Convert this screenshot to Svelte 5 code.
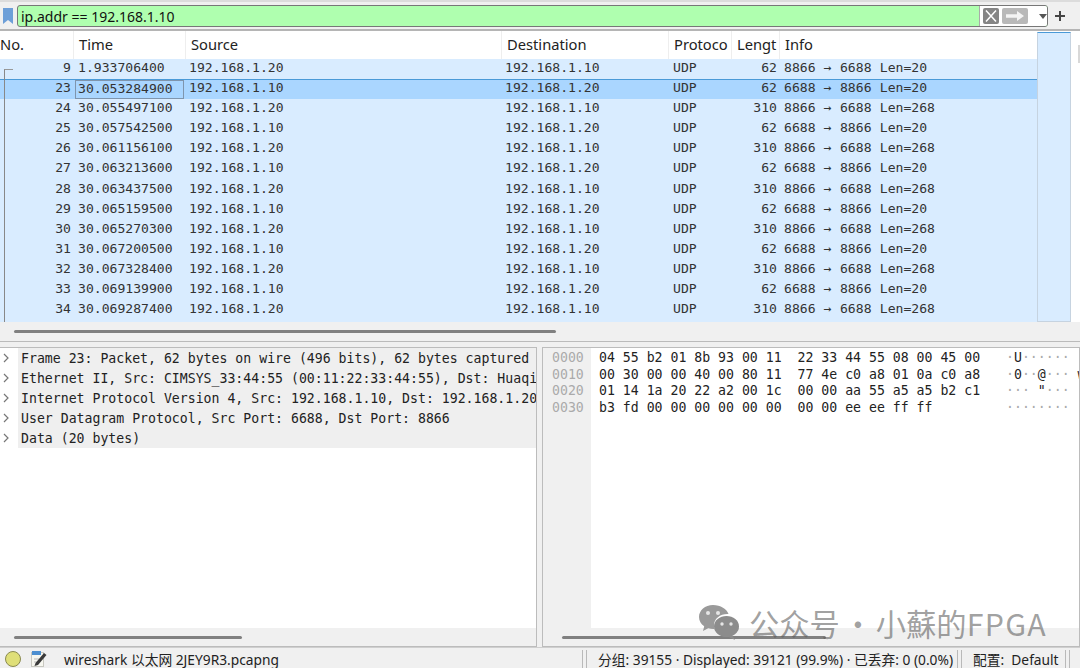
<script>
  const s20 = '192.168.1.20', s10 = '192.168.1.10';
  const raw = [
    [9,'1.933706400',0],[23,'30.053284900',1],[24,'30.055497100',0],[25,'30.057542500',1],
    [26,'30.061156100',0],[27,'30.063213600',1],[28,'30.063437500',0],[29,'30.065159500',1],
    [30,'30.065270300',0],[31,'30.067200500',1],[32,'30.067328400',0],[33,'30.069139900',1],[34,'30.069287400',0]
  ];
  const rows = raw.map(([no,time,rev]) => {
    const short = no === 9 || rev === 1;
    return { no, time, src: rev ? s10 : s20, dst: rev ? s20 : s10, len: short ? 62 : 310,
      info: (rev ? '6688 → 8866' : '8866 → 6688') + ' Len=' + (short ? 20 : 268) };
  });
  const tree = [
    'Frame 23: Packet, 62 bytes on wire (496 bits), 62 bytes captured (496 bits) on interface',
    'Ethernet II, Src: CIMSYS_33:44:55 (00:11:22:33:44:55), Dst: Huaqin_01:8b:93',
    'Internet Protocol Version 4, Src: 192.168.1.10, Dst: 192.168.1.20',
    'User Datagram Protocol, Src Port: 6688, Dst Port: 8866',
    'Data (20 bytes)'
  ];
  const hex = [
    ['0000','04 55 b2 01 8b 93 00 11  22 33 44 55 08 00 45 00','·U······ "3DU··E·'],
    ['0010','00 30 00 00 40 00 80 11  77 4e c0 a8 01 0a c0 a8','·0··@··· wN······'],
    ['0020','01 14 1a 20 22 a2 00 1c  00 00 aa 55 a5 a5 b2 c1','··· "··· ··U·····'],
    ['0030','b3 fd 00 00 00 00 00 00  00 00 ee ee ff ff','········ ······']
  ];
</script>

<div class="win">
  <div class="toolbar">
    <svg class="bm" width="12" height="17" viewBox="0 0 12 17"><path d="M1 0h10v16l-5-4-5 4z" fill="#6d9fd8"/></svg>
    <div class="filter">
      <span class="ftext">ip.addr == 192.168.1.10</span>
      <div class="fbtns">
        <svg width="16" height="16" viewBox="0 0 16 16"><rect width="16" height="16" rx="2" fill="#858585"/><path d="M3 2.500l10 11M13 2.500L3 13.500" stroke="#fff" stroke-width="1.500"/></svg>
        <svg width="26" height="16" viewBox="0 0 26 16"><rect width="26" height="16" rx="2" fill="#b9b9b9"/><path d="M4 6.300h11V3l7 5-7 5V9.700H4z" fill="#f4f4f4"/></svg>
        <svg class="caret" width="8" height="5" viewBox="0 0 8 5"><path d="M0 0h8L4 5z" fill="#555"/></svg>
      </div>
    </div>
    <svg class="plus" width="10" height="10" viewBox="0 0 10 10"><path d="M5 0v10M0 5h10" stroke="#444" stroke-width="2"/></svg>
  </div>

  <div class="list">
    <div class="listmain">
      <div class="head">
        <span class="c-no">No.</span><span class="c-time">Time</span><span class="c-src">Source</span><span class="c-dst">Destination</span><span class="c-pro">Protoco</span><span class="c-len">Lengt</span><span class="c-info">Info</span>
      </div>
      <div class="rows">
        {#each rows as r}
          <div class="row" class:sel={r.no === 23}>
            <span class="d-no">{r.no}</span><span class="d-time" class:focus={r.no === 23}>{r.time}</span><span class="d-src">{r.src}</span><span class="d-dst">{r.dst}</span><span class="d-pro">UDP</span><span class="d-len">{r.len}</span><span class="d-info">{r.info}</span>
          </div>
        {/each}
        <div class="rel"></div>
      </div>
    </div>
    <div class="mini"></div>
    <div class="vtrack"><div class="vthumb"></div></div>
  </div>

  <div class="hbar top"><div class="thumb t1"></div></div>

  <div class="panes">
    <div class="pane left">
      <div class="tree">
        {#each tree as t}
          <div class="tline">
            <svg class="chev" width="6" height="10" viewBox="0 0 6 10"><path d="M1 1l4 4-4 4" fill="none" stroke="#777" stroke-width="1.200"/></svg>
            <span class="ttext">{t}</span>
          </div>
        {/each}
      </div>
      <div class="hbar inner"><div class="thumb t2"></div></div>
    </div>
    <div class="pane right">
      <div class="hexwrap">
        <div class="offs">
          {#each hex as h}<div class="hl">{h[0]}</div>{/each}
        </div>
        <div class="hexes">
          {#each hex as h}<div class="hl hrow"><span class="hb">{h[1]}</span><span class="ha">{#each [...h[2]] as ch}<span class:dim={ch === '·'}>{ch}</span>{/each}</span></div>{/each}
        </div>
      </div>
      <div class="hbar inner"><div class="thumb t3"></div></div>
    </div>
  </div>

  <div class="status">
    <span class="led"></span>
    <svg class="note" width="16" height="17" viewBox="0 0 16 17"><rect x=".5" y="2.500" width="12" height="14" fill="#f7f7f0" stroke="#c8c8c0"/><rect x="1" y="1" width="9" height="4" fill="#4d8fd0"/><path d="M3 9h5M3 12h3" stroke="#bbb"/><path d="M4.500 13l8.500-10 2.500 2-8.500 10-3.500 1z" fill="#3a3a3a"/></svg>
    <span class="fname">wireshark 以太网 2JEY9R3.pcapng</span>
    <span class="sep s1"></span>
    <span class="stats">分组: 39155 · Displayed: 39121 (99.9%) · 已丢弃: 0 (0.0%)</span>
    <span class="sep s2"></span>
    <span class="prof">配置:&nbsp; Default</span>
    <span class="sep"></span>
  </div>

  <div class="wm">
    <svg width="42" height="38" viewBox="0 0 42 38">
      <path d="M15 1C7 1 1 6.500 1 13c0 3.800 2 7 5.200 9.300L5 27l5.200-2.700c1.500.4 3.100.7 4.800.7.500 0 1 0 1.400-.1C16 23.700 16 22.500 16 21.500 16 14.500 22 10 29.500 10c.3 0 .7 0 1 0C29 5 22.500 1 15 1z" fill="#9a9a9a"/>
      <ellipse cx="28.500" cy="22.500" rx="12.500" ry="10.500" fill="#8c8c8c"/>
      <path d="M34 31l3 5-6-3z" fill="#8c8c8c"/>
      <circle cx="10" cy="9" r="2" fill="#e6e6e6"/><circle cx="20" cy="9" r="2" fill="#e6e6e6"/>
      <circle cx="24" cy="20" r="1.700" fill="#e6e6e6"/><circle cx="33" cy="20" r="1.700" fill="#e6e6e6"/>
    </svg>
    <span>公众号 · 小蘇的<span class="latin">FPGA</span></span>
  </div>
</div>

<style>
  :global(body) { margin: 0; background: #fff; }
  .win { width: 1080px; height: 668px; position: relative; overflow: hidden; display: flex; flex-direction: column; background: #f0f0f0; color: #222; font-family: "Noto Sans", "Noto Sans CJK SC", sans-serif; }
  .toolbar { height: 31px; flex: none; box-sizing: border-box; display: flex; align-items: center; padding: 3px 0 2px 2px; background: #f0f0f0; border-top: 2px solid #dcdcdc; border-bottom: 2px solid #b5b5b5; }
  .bm { margin-right: 3px; flex: none; }
  .filter { width: 1031px; height: 22px; box-sizing: border-box; border: 1px solid #777; border-radius: 3px; background: #afffaf; display: flex; align-items: center; overflow: hidden; margin-right: 7px; }
  .ftext { flex: 1; padding-left: 3px; font-size: 14px; color: #111; }
  .fbtns { width: 68px; height: 100%; background: #fff; display: flex; align-items: center; gap: 3px; padding-left: 3px; box-sizing: border-box; border-left: 1px solid #aaa; }
  .caret { margin-left: 8px; }
  .plus { flex: none; }

  .list { display: flex; height: 291px; flex: none; background: #fff; }
  .listmain { width: 1037px; flex: none; display: flex; flex-direction: column; }
  .head { height: 28px; flex: none; display: flex; font-size: 14.700px; color: #222; background: #fff; }
  .head span { box-sizing: border-box; height: 100%; display: flex; align-items: center; border-right: 1px solid #eee; white-space: nowrap; overflow: hidden; padding: 0 0 2px 5px; }
  .head .c-no { width: 74px; padding-left: 0; }
  .c-time { width: 112px; }
  .c-src { width: 316px; }
  .c-dst { width: 167px; }
  .c-pro { width: 63px; }
  .c-len { width: 48px; }
  .head .c-info { flex: 1; border-right: 0; }
  .rows { flex: 1; position: relative; background: #d9ecff; display: flex; flex-direction: column; font-family: "DejaVu Sans Mono", monospace; font-size: 13.100px; color: #333; }
  .row { height: 20.080px; box-sizing: border-box; display: flex; white-space: pre; flex: none; }
  .row.sel { background: #aad6ff; border-top: 1px solid #4a9ad8; }
  .row span { box-sizing: border-box; display: flex; align-items: center; padding-bottom: 3px; }
  .row.sel span { padding-bottom: 4px; }
  .row .d-no { width: 71px; justify-content: flex-end; }
  .row .d-time { width: 113px; padding-left: 7px; }
  .row.sel .d-time.focus { margin-left: 4px; width: 109px; padding-left: 2px; border: 1px solid #7f95ad; padding-bottom: 3px; }
  .row .d-src { width: 316px; padding-left: 5px; }
  .row .d-dst { width: 168px; padding-left: 5px; }
  .row .d-pro { width: 54px; padding-left: 5px; }
  .row .d-len { width: 55px; justify-content: flex-end; }
  .row .d-info { padding-left: 7px; word-spacing: .4px; }
  .rel { position: absolute; left: 4px; top: 10px; bottom: 0; width: 8px; border-left: 1px solid #888; border-top: 1px solid #999; }
  .mini { width: 34px; flex: none; margin-top: 1px; border: 1px solid #c6d3e0; border-top: 1px solid #4a9ad8; background: #d9ecff; box-sizing: border-box; }
  .vtrack { flex: 1; padding: 14px 0 0 7px; }
  .vthumb { height: 18px; background: #d8d8d8; }

  .hbar { box-sizing: border-box; display: flex; align-items: center; background: #f0f0f0; flex: none; }
  .top { height: 20px; padding-bottom: 1px; border-bottom: 1px solid #bbb; }
  .thumb { height: 3px; background: #808080; border-radius: 2px; }
  .t1 { margin-left: 14px; width: 542px; }
  .t2 { margin-left: 14px; width: 228px; }
  .t3 { margin-left: 19px; width: 264px; }

  .panes { flex: 1; display: flex; gap: 5px; padding-top: 5px; min-height: 0; }
  .pane { background: #fff; border: 1px solid #bcbcbc; box-sizing: border-box; display: flex; flex-direction: column; overflow: hidden; min-width: 0; }
  .left { width: 537px; flex: none; border-left: 0; }
  .right { flex: 1; }
  .tree { flex: 1; font-family: "DejaVu Sans Mono", monospace; font-size: 13.200px; color: #222; }
  .tline { height: 20px; display: flex; align-items: center; white-space: pre; }
  .chev { margin: 0 9px 0 3px; flex: none; }
  .ttext { background: #efefef; flex: 1; height: 100%; display: flex; align-items: center; padding-left: 3px; overflow: hidden; }
  .hexwrap { flex: 1; display: flex; font-family: "DejaVu Sans Mono", monospace; font-size: 13.200px; min-height: 0; }
  .offs { width: 48px; flex: none; background: #f0f0f0; padding: 1px 0 0 9px; color: #aaa; box-sizing: border-box; }
  .hl { height: 16.700px; display: flex; align-items: center; white-space: pre; }
  .hexes { flex: 1; padding: 1px 0 0 8px; color: #222; overflow: hidden; min-width: 0; }
  .hb { flex: none; width: 407px; }
  .ha { flex: none; color: #222; }
  .dim { color: #aaa; }
  .inner { height: 18px; }

  .status { height: 21px; flex: none; display: flex; align-items: center; font-size: 13.750px; color: #222; border-top: 1px solid #cfcfcf; box-sizing: border-box; padding-top: 1px; background: #f0f0f0; white-space: pre; }
  .led { width: 16px; height: 16px; border-radius: 50%; background: #dfdf78; border: 1px solid #8a8a50; margin-left: 5px; box-sizing: border-box; flex: none; }
  .note { margin-left: 10px; flex: none; }
  .fname { margin-left: 17px; width: 518px; flex: none; }
  .sep { width: 3px; height: 18px; border-left: 1px solid #b9b9b9; border-right: 1px solid #b9b9b9; flex: none; margin: 0 6px 0 0; }
  .s1 { margin-right: 11px; }
  .s2 { margin-right: 11px; }
  .stats { width: 359px; flex: none; }
  .prof { width: 92px; flex: none; }

  .wm { position: absolute; left: 698px; top: 601px; display: flex; align-items: center; gap: 9px; font-size: 30.300px; word-spacing: -4px; color: rgba(90,90,90,.58); font-family: "Noto Sans CJK SC", sans-serif; white-space: pre; pointer-events: none; }
  .latin { letter-spacing: 1.300px; }
</style>
